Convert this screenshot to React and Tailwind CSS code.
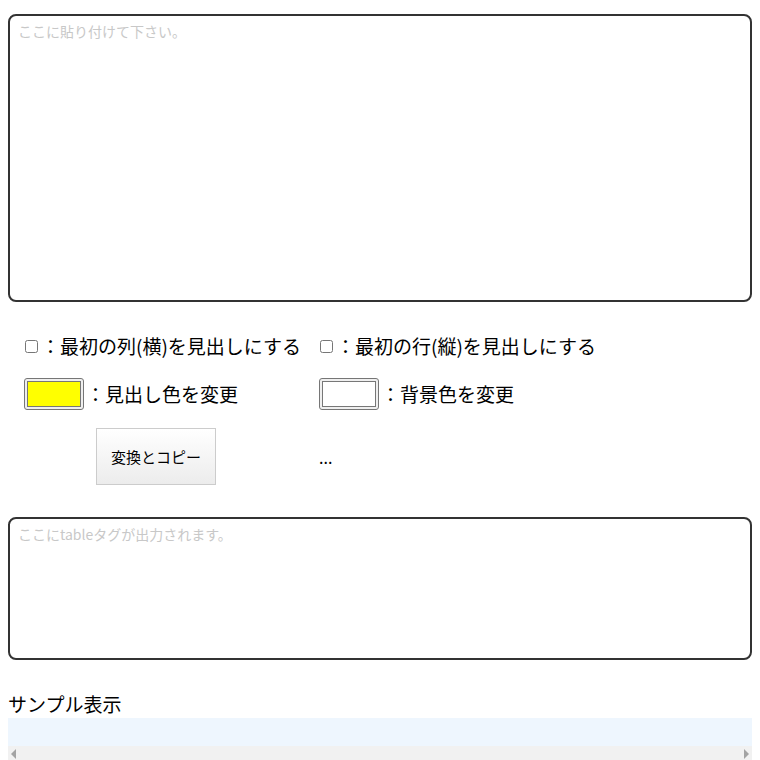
import React from 'react';

const jp = { fontFamily: '"Noto Sans CJK JP", "Noto Sans", sans-serif' };

function Swatch({ color }) {
  return (
    <div className="w-[60px] h-[32px] rounded-[3px] border border-[#767676] bg-[#efefef] p-[2px] flex">
      <div className="flex-1 border border-[#777]" style={{ background: color }} />
    </div>
  );
}

export default function App() {
  return (
    <div className="bg-white w-[760px] h-[760px] overflow-hidden px-2 pt-[14px] text-black" style={jp}>
      <textarea
        className="block w-[744px] h-[288px] border-2 border-[#333] rounded-lg px-2 py-[6px] text-[14px] leading-[18px] placeholder:text-[#c8c8c8] resize-none outline-none"
        placeholder="ここに貼り付けて下さい。"
      />

      <div className="pl-4 pt-[32px]">
        <div className="grid grid-cols-[295px_1fr] text-[19px] leading-[24px]">
          <label className="flex items-center h-[24px]">
            <input type="checkbox" className="w-[13px] h-[13px] m-0 ml-[1px] mr-[3px] accent-gray-500" />
            <span>：最初の列(横)を見出しにする</span>
          </label>
          <label className="flex items-center h-[24px]">
            <input type="checkbox" className="w-[13px] h-[13px] m-0 ml-[1px] mr-[3px] accent-gray-500" />
            <span>：最初の行(縦)を見出しにする</span>
          </label>

          <div className="flex items-center mt-[20px]">
            <Swatch color="#ffff00" />
            <span className="ml-[2px]">：見出し色を変更</span>
          </div>
          <div className="flex items-center mt-[20px]">
            <Swatch color="#ffffff" />
            <span className="ml-[2px]">：背景色を変更</span>
          </div>

          <div className="mt-[18px] pl-[72px]">
            <button className="w-[120px] h-[57px] border border-[#ccc] bg-gradient-to-b from-white to-[#ececec] text-[15px]">
              変換とコピー
            </button>
          </div>
          <div className="mt-[18px] flex items-center h-[57px] text-[16px]">...</div>
        </div>
      </div>

      <textarea
        className="block mt-[32px] w-[744px] h-[143px] border-2 border-[#333] rounded-lg px-2 py-[6px] text-[14px] leading-[18px] placeholder:text-[#c8c8c8] resize-none outline-none"
        placeholder="ここにtableタグが出力されます。"
      />

      <div className="mt-[30px] text-[19px] leading-[28px]">サンプル表示</div>
      <div className="w-[744px] h-[28px] bg-[#eef6fe]" />
      <div className="w-[744px] h-[16px] bg-[#f1f1f1] flex items-center justify-between px-[3px]">
        <div className="w-0 h-0 border-y-[5px] border-y-transparent border-r-[5px] border-r-[#a3a3a3]" />
        <div className="w-0 h-0 border-y-[5px] border-y-transparent border-l-[5px] border-l-[#a3a3a3]" />
      </div>
    </div>
  );
}
